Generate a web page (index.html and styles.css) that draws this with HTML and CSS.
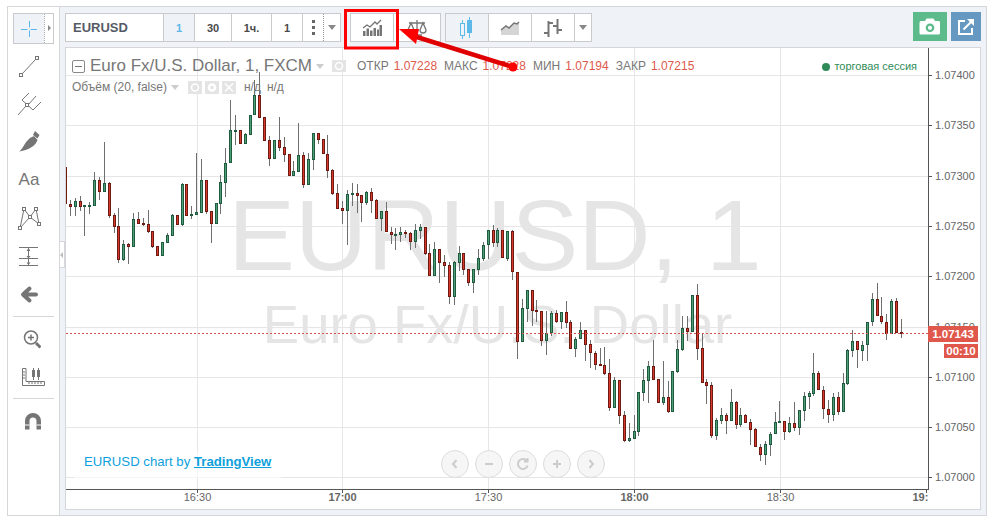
FILE: index.html
```html
<!DOCTYPE html>
<html lang="en">
<head>
  <meta charset="UTF-8" />
  <title>EURUSD chart</title>
  <link rel="stylesheet" href="styles.css">
</head>
<body>
  <div class="widget">
    <!-- drawing tools -->
    <aside class="side">
      <div class="tool tool-active">
        <span class="tool-main">
          <svg width="24" height="24" viewBox="0 0 24 24" class="ic-cross"><path d="M12.500 4v6.500M12.500 13.500V20M4 12.500h6.500M13.500 12.500H20"/></svg>
        </span>
        <span class="tool-more"></span>
      </div>
      <div class="tool">
        <svg width="24" height="24" viewBox="0 0 24 24" class="ic-line"><path d="M5.500 19.500 18.500 5.500"/><rect x="2.500" y="19.500" width="3" height="3"/><rect x="18.500" y="2.500" width="3" height="3"/></svg>
      </div>
      <div class="tool">
        <svg width="24" height="24" viewBox="0 0 24 24" class="ic-line"><path d="M1 23 8.500 14.500M5 8l11 10M5 8l7-7M11.500 12.500 19 4M16 18l8-8"/><rect x="8.500" y="11.500" width="3" height="3"/></svg>
      </div>
      <div class="tool">
        <svg width="24" height="24" viewBox="0 0 24 24" class="ic-fill"><path d="M2 21.500C6 19 7 13 13 8l4-2 3.500 4C19 15 13 20 2 21.500Z"/><path d="M16 5l2-4 4.500 4-2 3.500Z"/></svg>
      </div>
      <div class="tool tool-text">Aa</div>
      <div class="tool">
        <svg width="24" height="24" viewBox="0 0 24 24" class="ic-line"><path d="M3 22 7 3l6 8-10 11M13 11l6-8 3 15-9-7"/><rect x="5.500" y="1.500" width="3" height="3"/><rect x="17.500" y="1.500" width="3" height="3"/><rect x="11.500" y="9.500" width="3" height="3"/><rect x="1.500" y="20.500" width="3" height="3"/><rect x="20.500" y="16.500" width="3" height="3"/></svg>
      </div>
      <div class="tool">
        <svg width="24" height="24" viewBox="0 0 24 24" class="ic-line"><path d="M2 3.500h19M2 14.500h19M2 21.500h19M11.500 4v10M11.500 15v6"/><path class="ic-solid" d="M9.500 7l2-3 2 3ZM9.500 12l2 2.500 2-2.500ZM9.500 18.500l2 2.500 2-2.500Z"/></svg>
      </div>
      <div class="tool">
        <svg width="24" height="24" viewBox="0 0 24 24" class="ic-back"><path d="M19 12.500H8M12.500 6.500 6 12.500l6.500 6"/></svg>
      </div>
      <div class="side-sep"></div>
      <div class="tool">
        <svg width="24" height="24" viewBox="0 0 24 24" class="ic-zoom"><circle cx="14" cy="11.500" r="6.500"/><path d="M14 8.500v6M11 11.500h6"/><path class="ic-handle" d="M19 17l4.500 4.500"/></svg>
      </div>
      <div class="tool">
        <svg width="32" height="24" viewBox="0 0 32 24" class="ic-line"><path d="M9.500 4.500H13v13h18.500v4h-22ZM9.500 8H12M9.500 11H12M9.500 14H12M16 17.500V20M19 17.500V20M22 17.500V20M25 17.500V20M28 17.500V20M20.500 4v12M25.500 4v12"/><rect class="ic-solid" x="19" y="6" width="3" height="7"/><rect class="ic-solid" x="24" y="6" width="3" height="7"/></svg>
      </div>
      <div class="side-sep side-sep-low"></div>
      <div class="tool">
        <svg width="24" height="24" viewBox="0 0 24 24" class="ic-fill"><path d="M8 20.500V12a8 8 0 0 1 16 0v8.500h-4.500V12a3.500 3.500 0 0 0-7 0v8.500Z"/><path class="ic-gap" d="M8 16h4.500M19.500 16H24"/></svg>
      </div>
    </aside>

    <main class="main">
      <div class="tabs-handle"></div>
      <div class="toolbar">
        <div class="group">
          <div class="tb tb-symbol">EURUSD</div>
          <div class="tb tb-res tb-on">1</div>
          <div class="tb tb-res w37">30</div>
          <div class="tb tb-res w40">1ч.</div>
          <div class="tb tb-res">1</div>
          <div class="tb tb-dots"><i></i><i></i><i></i></div>
          <div class="tb tb-arrow"><b class="caret"></b></div>
        </div>
        <div class="group group-tools">
          <div class="tb w43">
            <svg width="20" height="18" viewBox="0 0 20 18" class="tb-ic"><path class="ic-solid" d="M1 12h2.500v5H1ZM4.500 9.500H7V17H4.500ZM8 11.500h2.500V17H8ZM11.500 9H14v8h-2.500ZM15 10.500h2V17h-2ZM17.500 6H20v11h-2.500Z"/><path d="M1 9l4-3 3 2 5-5 2 2 4-4"/></svg>
          </div>
          <div class="tb w47">
            <svg width="20" height="18" viewBox="0 0 20 18" class="tb-ic"><path d="M10 1v14M2 4h16M4 4 1 11a3 3 0 0 0 6 0ZM16 4l-3 7a3 3 0 0 0 6 0ZM5 16h10"/></svg>
          </div>
        </div>
        <div class="group group-types">
          <div class="tb w43 tb-on">
            <svg width="16" height="22" viewBox="0 0 16 22" class="ic-candle"><path d="M3.500 3v3M3.500 19v3M10.500 0v3M10.500 15v6"/><rect x="1.500" y="6.500" width="4" height="12"/><rect class="ic-candle-fill" x="8.500" y="3.500" width="4" height="12"/></svg>
          </div>
          <div class="tb w43">
            <svg width="20" height="16" viewBox="0 0 20 16"><path class="ic-area" d="M1 10l5-4 3 2 5-5 3 1 2-2v13H1Z"/><path class="ic-area-line" d="M1 10l5-4 3 2 5-5 3 1 2-2"/></svg>
          </div>
          <div class="tb w43">
            <svg width="20" height="20" viewBox="0 0 20 20" class="ic-bars"><path d="M5.500 3v16M1 15h4.500M5.500 5H10M14.500 1v15M10 8h4.500M14.500 12H19"/></svg>
          </div>
          <div class="tb tb-arrow w22"><b class="caret"></b></div>
        </div>
        <div class="toolbar-right">
          <div class="square square-green">
            <svg width="22" height="18" viewBox="0 0 22 18"><path class="ic-white" fill-rule="evenodd" d="M2 3h4l1.500-2.500h7L16 3h4a1.500 1.500 0 0 1 1 1.500V15a1.500 1.500 0 0 1-1 1.500H2A1.500 1.500 0 0 1 .5 15V4.500A1.500 1.500 0 0 1 2 3Zm9 2.500a4.300 4.300 0 1 0 0 8.600 4.300 4.300 0 0 0 0-8.600Zm0 2.200a2.100 2.100 0 1 1 0 4.200 2.100 2.100 0 0 1 0-4.200Z"/></svg>
          </div>
          <div class="square square-blue">
            <svg width="18" height="18" viewBox="0 0 18 18" class="ic-share"><path d="M8 3H2v13h13v-6"/><path d="M6.500 11.500 15 3"/><path class="ic-white" d="M10 1h7v7Z"/></svg>
          </div>
        </div>
      </div>

      <section class="chart">
        <svg id="plot" class="plot" width="914" height="461" viewBox="66 48 914 461" shape-rendering="crispEdges">
          <defs><clipPath id="plot-clip"><rect x="66" y="48" width="862" height="461"/></clipPath></defs>
          <g class="grid">
            <path d="M66 75.500H928M66 125.500H928M66 176.500H928M66 226.500H928M66 276.500H928M66 327.500H928M66 377.500H928M66 427.500H928M66 477.500H928"/>
            <path d="M197.500 48V489M342.500 48V489M488.500 48V489M634.500 48V489M780.500 48V489"/>
          </g>
          <g class="mark" shape-rendering="auto">
            <text x="495" y="270" class="mark-big">EURUSD, 1</text>
            <text x="497.500" y="343" class="mark-small">Euro Fx/U.S. Dollar</text>
          </g>
          <g id="candles"><rect x="66" y="167" width="1" height="37" fill="#6e1a12"/></g>
          <path class="last-line" d="M66 333.500H928"/>
          <g class="axis">
            <path d="M928.500 48V489.500M66 489.500H928.500"/>
            <path d="M928 75.500h4M928 125.500h4M928 176.500h4M928 226.500h4M928 276.500h4M928 327.500h4M928 377.500h4M928 427.500h4M928 477.500h4M197.500 490v3M342.500 490v3M488.500 490v3M634.500 490v3M780.500 490v3M926.500 490v3"/>
          </g>
          <g class="labels" shape-rendering="auto">
            <text x="935" y="79">1.07400</text>
            <text x="935" y="129">1.07350</text>
            <text x="935" y="180">1.07300</text>
            <text x="935" y="230">1.07250</text>
            <text x="935" y="280">1.07200</text>
            <text x="935" y="331">1.07150</text>
            <text x="935" y="381">1.07100</text>
            <text x="935" y="431">1.07050</text>
            <text x="935" y="481">1.07000</text>
          </g>
          <g class="times" shape-rendering="auto" clip-path="url(#plot-clip)">
            <text x="197.500" y="501">16:30</text>
            <text x="342.500" y="501" class="bold">17:00</text>
            <text x="488.500" y="501">17:30</text>
            <text x="634.500" y="501" class="bold">18:00</text>
            <text x="780.500" y="501">18:30</text>
            <text x="926.500" y="501" class="bold">19:00</text>
          </g>
        </svg>

        <div class="legend">
          <div class="legend-row">
            <span class="collapse"></span>
            <span class="title">Euro Fx/U.S. Dollar, 1, FXCM</span>
            <b class="caret caret-light"></b>
            <span class="mini mini-eye"><svg width="14" height="12" viewBox="0 0 14 12"><circle cx="7" cy="6" r="3.500" fill="none" stroke="#fff" stroke-width="1.500"/></svg></span>
            <span class="ohlc">
              <span>ОТКР</span><em>1.07228</em>
              <span>МАКС</span><em>1.07228</em>
              <span>МИН</span><em>1.07194</em>
              <span>ЗАКР</span><em>1.07215</em>
            </span>
          </div>
          <div class="legend-row legend-study">
            <span class="study">Объём (20, false)</span>
            <b class="caret caret-light"></b>
            <span class="minis">
              <span class="mini"><svg width="14" height="13" viewBox="0 0 14 13"><circle cx="7" cy="6.500" r="3.500" fill="none" stroke="#fff" stroke-width="1.500"/></svg></span>
              <span class="mini"><svg width="14" height="13" viewBox="0 0 14 13"><circle cx="7" cy="6.500" r="3" fill="none" stroke="#fff" stroke-width="2.500"/></svg></span>
              <span class="mini"><svg width="14" height="13" viewBox="0 0 14 13"><path d="M3 2.500l8 8M11 2.500l-8 8" stroke="#fff" stroke-width="1.500"/></svg></span>
            </span>
            <span class="na">н/д</span>
            <span class="na">н/д</span>
          </div>
        </div>

        <div class="session"><i></i>торговая сессия</div>

        <div class="credit">EURUSD chart by <a href="#">TradingView</a></div>

        <div class="nav">
          <span class="nav-btn"><svg width="12" height="12" viewBox="0 0 12 12"><path d="M7.500 2 4 6l3.500 4"/></svg></span>
          <span class="nav-btn"><svg width="12" height="12" viewBox="0 0 12 12"><path d="M2 6h8"/></svg></span>
          <span class="nav-btn"><svg width="14" height="14" viewBox="0 0 14 14"><path d="M11 4a5 5 0 1 0 .7 4.500M11.500 1v3.500H8"/></svg></span>
          <span class="nav-btn"><svg width="12" height="12" viewBox="0 0 12 12"><path d="M2 6h8M6 2v8"/></svg></span>
          <span class="nav-btn"><svg width="12" height="12" viewBox="0 0 12 12"><path d="M4.500 2 8 6l-3.500 4"/></svg></span>
        </div>

        <div class="tag tag-price">1.07143</div>
        <div class="tag tag-timer">00:10</div>
      </section>
    </main>
  </div>

  <!-- red callout drawn over the screenshot -->
  <svg class="callout" width="991" height="519" viewBox="0 0 991 519">
    <rect x="345.500" y="10.500" width="52" height="37.500"/>
    <path class="callout-line" d="M513 67 412 35.500"/>
    <path class="callout-head" d="M399 29l20 0-3 15Z"/>
    <circle cx="513" cy="67" r="4.500"/>
  </svg>

  <script src="chart.js"></script>
</body>
</html>
```

FILE: styles.css
```css
:root{
  --line:#d4d6d9;
  --btn-line:#c8cacd;
  --panel:#eff2f7;
  --icon:#757575;
  --text:#777;
  --blue:#5cb9e8;
  --red:#e0584b;
}
*{box-sizing:border-box;}
body{
  margin:0;
  width:991px;
  height:519px;
  overflow:hidden;
  position:relative;
  background:#fff;
  font-family:"Liberation Sans",Arial,sans-serif;
  color:var(--text);
}
svg{display:block;}

.widget{
  margin:6px 0 0 7px;
  width:980px;
  height:510px;
  border:1px solid var(--line);
  display:flex;
}

/* left tools */
.side{
  width:52px;
  flex:none;
  padding:6px 5px 0;
  background:#fff;
  border-right:1px solid var(--line);
}
.tool{
  width:32px;
  height:38px;
  display:flex;
  align-items:center;
  justify-content:center;
}
.tool-active{
  width:41px;
  height:31px;
  margin-bottom:3px;
  border:1px solid var(--btn-line);
  background:var(--panel);
  justify-content:flex-start;
}
.tool-main{width:30px;display:flex;justify-content:center;}
.tool-more{
  width:9px;
  height:100%;
  background:#fff;
  border-left:1px dotted #aaa;
  position:relative;
}
.tool-more:after{
  content:"";
  position:absolute;
  left:3px;
  top:11px;
  border-left:3px solid #888;
  border-top:3px solid transparent;
  border-bottom:3px solid transparent;
}
.tool-text{font-size:17px;color:var(--icon);}
.side-sep{height:1px;background:var(--line);margin:3px 0 2px;}
.side-sep-low{margin:3px 0 3px;}

.ic-cross path{fill:none;stroke:var(--blue);stroke-width:1;}
.ic-line path,.ic-line rect{fill:#fff;stroke:var(--icon);stroke-width:1;}
.ic-line path{fill:none;}
.ic-line .ic-solid,.ic-solid{fill:var(--icon);stroke:none;}
.ic-fill path{fill:var(--icon);}
.ic-fill .ic-gap{fill:none;stroke:#fff;stroke-width:1;}
.ic-back path{fill:none;stroke:var(--icon);stroke-width:4;stroke-linecap:round;stroke-linejoin:round;}
.ic-zoom circle,.ic-zoom path{fill:none;stroke:var(--icon);stroke-width:1.500;}
.ic-zoom .ic-handle{stroke-width:3;}

/* top bar */
.main{
  flex:1;
  position:relative;
  background:var(--panel);
  padding:6px 5px 5px;
  display:flex;
  flex-direction:column;
  gap:5px;
}
.tabs-handle{
  position:absolute;
  left:0;
  top:234px;
  width:5px;
  height:27px;
  background:#fff;
  border:1px solid var(--line);
  border-left:0;
}
.tabs-handle:after{
  content:"";
  position:absolute;
  left:0;
  top:10px;
  border-right:3px solid #bbb;
  border-top:3px solid transparent;
  border-bottom:3px solid transparent;
}
.toolbar{height:29px;display:flex;flex:none;}
.group{
  display:flex;
  background:#fff;
  border:1px solid var(--btn-line);
}
.group-tools{margin-left:9px;}
.group-types{margin-left:4px;}
.tb{
  width:31px;
  display:flex;
  align-items:center;
  justify-content:center;
  border-right:1px solid var(--btn-line);
  font-size:11px;
  font-weight:bold;
  color:#4a4a4a;
}
.tb:last-child{border-right:0;}
.tb-symbol{
  width:98px;
  justify-content:flex-start;
  padding-left:7px;
  font-size:13px;
  color:#555b66;
}
.tb-on{background:var(--panel);color:var(--blue);}
.w37{width:37px;}
.w40{width:40px;}
.w43{width:43px;}
.w47{width:46px;}
.w22{width:21px;}
.tb-dots{
  width:21px;
  flex-direction:column;
  gap:3px;
  border-right:1px dotted #999;
}
.tb-dots i{width:3px;height:3px;background:#666;}
.tb-arrow{width:16px;}
.caret{
  display:block;
  border-top:5px solid #888;
  border-left:4px solid transparent;
  border-right:4px solid transparent;
}
.caret-light{border-top-color:#ccc;}
.tb-ic path{fill:none;stroke:var(--icon);stroke-width:1.300;}
.tb-ic .ic-solid{fill:var(--icon);stroke:none;}
.ic-candle path,.ic-candle rect{fill:none;stroke:var(--blue);stroke-width:1;}
.ic-candle .ic-candle-fill{fill:var(--blue);}
.ic-area{fill:#d5d5d5;}
.ic-area-line{fill:none;stroke:var(--icon);stroke-width:1.500;}
.ic-bars path{fill:none;stroke:var(--icon);stroke-width:2;}

.toolbar-right{margin:-1px 0 0 auto;display:flex;gap:4px;}
.square{
  width:34px;
  height:29px;
  display:flex;
  align-items:center;
  justify-content:center;
}
.square-green{background:#5dba8a;}
.square-blue{background:#6699c2;width:30px;}
.ic-white{fill:#fff;stroke:none;}
.ic-share path{fill:none;stroke:#fff;stroke-width:2;}
.ic-share .ic-white{fill:#fff;stroke:none;}

/* chart */
.chart{
  position:relative;
  height:463px;
  border:1px solid var(--line);
  background:#fff;
}
.plot{display:block;}
.grid path{fill:none;stroke:#e6e6e6;stroke-width:1;}
.mark text{fill:#e5e5e5;text-anchor:middle;}
.mark-big{font-size:100px;}
.mark-small{font-size:54.500px;}
.last-line{fill:none;stroke:#d9534f;stroke-width:1;stroke-dasharray:2 2;}
.axis path{fill:none;stroke:#555;stroke-width:1;}
.labels text{font-size:11px;fill:#666;}
.times text{font-size:11px;fill:#666;text-anchor:middle;}
.times .bold{font-weight:bold;}

.legend{position:absolute;left:6px;top:11px;}
.legend-row{display:flex;align-items:center;height:14px;}
.legend-study{margin-top:7px;}
.collapse{
  width:13px;
  height:13px;
  border:1px solid #888;
  border-radius:2px;
  margin-right:5px;
  position:relative;
}
.collapse:after{
  content:"";
  position:absolute;
  left:2px;
  right:2px;
  top:5px;
  height:1px;
  background:#777;
}
.title{font-size:17px;color:#777;}
.caret-light{margin-left:4px;}
.mini{width:14px;height:13px;background:#e4e4e4;display:block;}
.mini-eye{margin-left:8px;height:12px;}
.ohlc{display:flex;gap:5px;margin-left:11px;font-size:12px;color:#777;}
.ohlc em{font-style:normal;color:var(--red);margin-right:2px;}
.study{font-size:12px;}
.minis{display:flex;gap:3px;margin-left:9px;margin-right:8px;}
.na{font-size:12px;margin-right:6px;}

.session{
  position:absolute;
  right:63px;
  top:12px;
  font-size:11px;
  line-height:13px;
  color:#2e8b57;
  display:flex;
  align-items:center;
  gap:4px;
}
.session i{width:8px;height:8px;border-radius:50%;background:#2e8b57;}

.credit{
  position:absolute;
  left:8px;
  top:404px;
  padding:0 10px;
  height:26px;
  line-height:20px;
  font-size:13.200px;
  color:#0e9fdc;
  background:rgba(255,255,255,.6);
}
.credit a{color:#0e9fdc;font-weight:bold;}

.nav{position:absolute;left:375px;top:402px;display:flex;gap:6px;}
.nav-btn{
  width:28px;
  height:28px;
  border:1px solid #ddd;
  border-radius:50%;
  background:rgba(245,245,245,.9);
  display:flex;
  align-items:center;
  justify-content:center;
}
.nav-btn path{fill:none;stroke:#ccc;stroke-width:2;}

.tag{
  position:absolute;
  background:var(--red);
  color:#fff;
  font-size:11.500px;
  font-weight:bold;
  text-align:center;
}
.tag-price{left:862px;top:278px;width:50px;height:16px;line-height:16px;}
.tag-timer{left:878px;top:296px;width:34px;height:14px;line-height:14px;}

/* callout */
.callout{position:absolute;left:0;top:0;pointer-events:none;}
.callout rect{fill:none;stroke:#f00;stroke-width:3;}
.callout-line{fill:none;stroke:#e00000;stroke-width:4.500;}
.callout-head,.callout circle{fill:#f00;}
```

FILE: chart.js
```js
// candles read off the picture: [colour, wick top, body top, body bottom, wick bottom]
// values are in thirds of a pixel, measured from each block's top
const blocks = [
  { top: 100, rows: [
    ['r',300,312,320,347],['g',294,304,320,347],['r',288,304,320,332],['g',315,315,320,407],
    ['g',306,316,318,342],['g',216,240,317,317],['r',232,240,275,300],['g',126,250,275,275],
    ['r',246,250,347,353],['r',340,346,380,398],['r',324,379,479,488],['g',420,433,479,482],
    ['r',430,433,440,491],['g',339,358,440,440],['r',336,358,371,371],['r',354,370,374,378],
    ['r',330,373,395,398],['r',394,394,440,443],['r',439,439,467,467],['g',425,427,467,467],
    ['g',399,406,428,428],['g',343,346,407,407],['r',346,346,374,374],['g',249,253,374,377],
    ['r',253,253,347,347],['g',319,343,347,357],['g',158,337,344,345],['g',177,240,338,338],
    ['r',240,240,335,341],['r',334,334,371,429],['g',310,310,371,371],['g',225,247,311,342],
    ['g',144,190,248,291],['g',0,91,190,190],['g',45,91,93,134],['r',91,91,131,131],
    ['g',100,102,131,131],['g',45,45,104,104],['g',-60,-15,46,46],['r',-84,-15,53,53],
    ['r',52,52,122,122],['r',109,120,177,197],['g',120,120,177,177],['r',52,120,144,152],
    ['r',111,142,164,185],['r',162,162,227,227],['g',183,213,227,227],['g',69,165,215,215],
    ['r',157,165,254,263],['g',159,178,254,254],['g',99,99,179,209],['r',99,99,119,131],
    ['r',118,118,163,163],['r',105,163,212,234],['r',208,211,281,284],['r',252,280,326,326],
    ['r',303,325,332,372],['g',270,283,332,434],['g',250,280,284,318],['r',252,280,287,339],
    ['r',286,286,308,366],['g',273,277,308,314],['r',265,277,302,339],['r',298,300,356,356],
    ['g',334,334,356,393],['r',307,334,397,397],['r',381,397,404,432],['g',384,402,404,449],
    ['g',381,397,404,425],['r',391,397,401,414],['r',395,400,425,449],['g',372,391,425,445],
    ['g',372,381,392,416],['r',381,381,461,465],['r',432,460,527,527],['g',426,448,528,528],
    ['r',448,448,488,548],['r',465,487,497,530],['r',485,496,590,613],['g',484,487,590,615],
    ['g',438,460,488,512],['r',460,460,510,526],['r',508,508,548,558],['g',508,508,548,578],
    ['g',447,475,509,526],['g',426,436,476,482],['g',390,391,436,476],['r',376,391,428,441],
    ['g',385,391,428,440],['r',391,391,475,475],['g',392,394,476,482],['r',391,394,517,539]
  ]},
  { top: 240, rows: [
    ['r',97,97,305,356],['g',178,205,305,305],['g',151,151,206,245],['r',151,151,212,257],
    ['r',180,210,215,245],['r',214,214,302,318],['g',214,280,302,345],['g',214,219,280,288],
    ['r',210,220,245,250],['g',217,217,245,267],['r',183,217,248,263],['r',240,247,328,328],
    ['g',292,298,328,350],['g',247,271,298,298],['r',271,271,314,362],['r',300,313,340,384],
    ['r',334,340,374,389],['r',324,373,378,378],['r',322,376,402,404],['r',357,400,503,513],
    ['g',412,420,503,503],['r',420,420,527,552],['r',514,526,603,605],['g',550,595,603,605],
    ['g',526,574,597,597],['g',457,457,575,587],['g',387,421,458,483],['g',362,379,422,489],
    ['r',300,379,419,419],['r',418,418,488,490],['g',363,472,488,496],['r',423,472,515,518],
    ['g',394,394,515,515],['g',300,327,396,398],['g',228,265,330,333],['r',228,265,275,303],
    ['g',166,166,275,275],['r',132,166,326,360],['r',282,325,428,430],['r',418,427,437,491],
    ['r',427,436,587,593],['g',535,541,587,600],['g',505,526,542,552],['r',520,526,542,582],
    ['g',447,487,542,542],['r',484,487,554,567]
  ]},
  { top: 270, rows: [
    ['g',415,436,464,470],['r',433,436,458,458],['r',447,457,479,525],['r',473,477,532,532],
    ['r',522,532,554,572],['g',513,523,554,585],['g',487,493,524,558],['g',426,457,493,493],
    ['g',392,454,458,458],['r',454,454,485,510],['g',441,460,485,488],['r',396,460,473,483],
    ['g',420,421,473,494],['g',366,379,422,452],['g',364,370,380,416],['g',249,310,371,378],
    ['r',304,310,361,361],['r',348,361,418,447],['r',390,418,434,458],['g',368,381,434,452],
    ['r',366,381,425,434],['g',308,339,425,425],['g',238,240,342,345],['g',180,214,242,260],
    ['r',213,214,241,293],['g',212,226,242,272],['g',156,157,226,272],['g',69,88,157,167],
    ['r',39,88,139,139],['r',82,139,155,163],['r',132,155,193,209],['g',88,93,193,193],
    ['r',85,93,189,189],['r',148,187,193,203]
  ]}
];

const colours = {
  g: { edge: '#1f5c3f', fill: '#4f9e77' },
  r: { edge: '#6e1a12', fill: '#d8392b' }
};

let svg = '';
let i = 0;
const rect = (x, y, w, h, fill) => `<rect x="${x}" y="${y}" width="${w}" height="${h}" fill="${fill}"/>`;

blocks.forEach(block => {
  const py = v => Math.round(block.top + v / 3);
  block.rows.forEach(([c, wt, bt, bb, wb]) => {
    const x = Math.floor(70.3 + 4.86 * i);
    const top = py(bt);
    const h = Math.max(py(bb) - top, 2);
    svg += rect(x, py(wt), 1, py(wb) - py(wt), '#6f6f6f');
    svg += rect(x - 1, top, 3, h, colours[c].edge);
    if (h > 2) svg += rect(x, top + 1, 1, h - 2, colours[c].fill);
    i++;
  });
});

document.getElementById('candles').insertAdjacentHTML('beforeend', svg);
```
